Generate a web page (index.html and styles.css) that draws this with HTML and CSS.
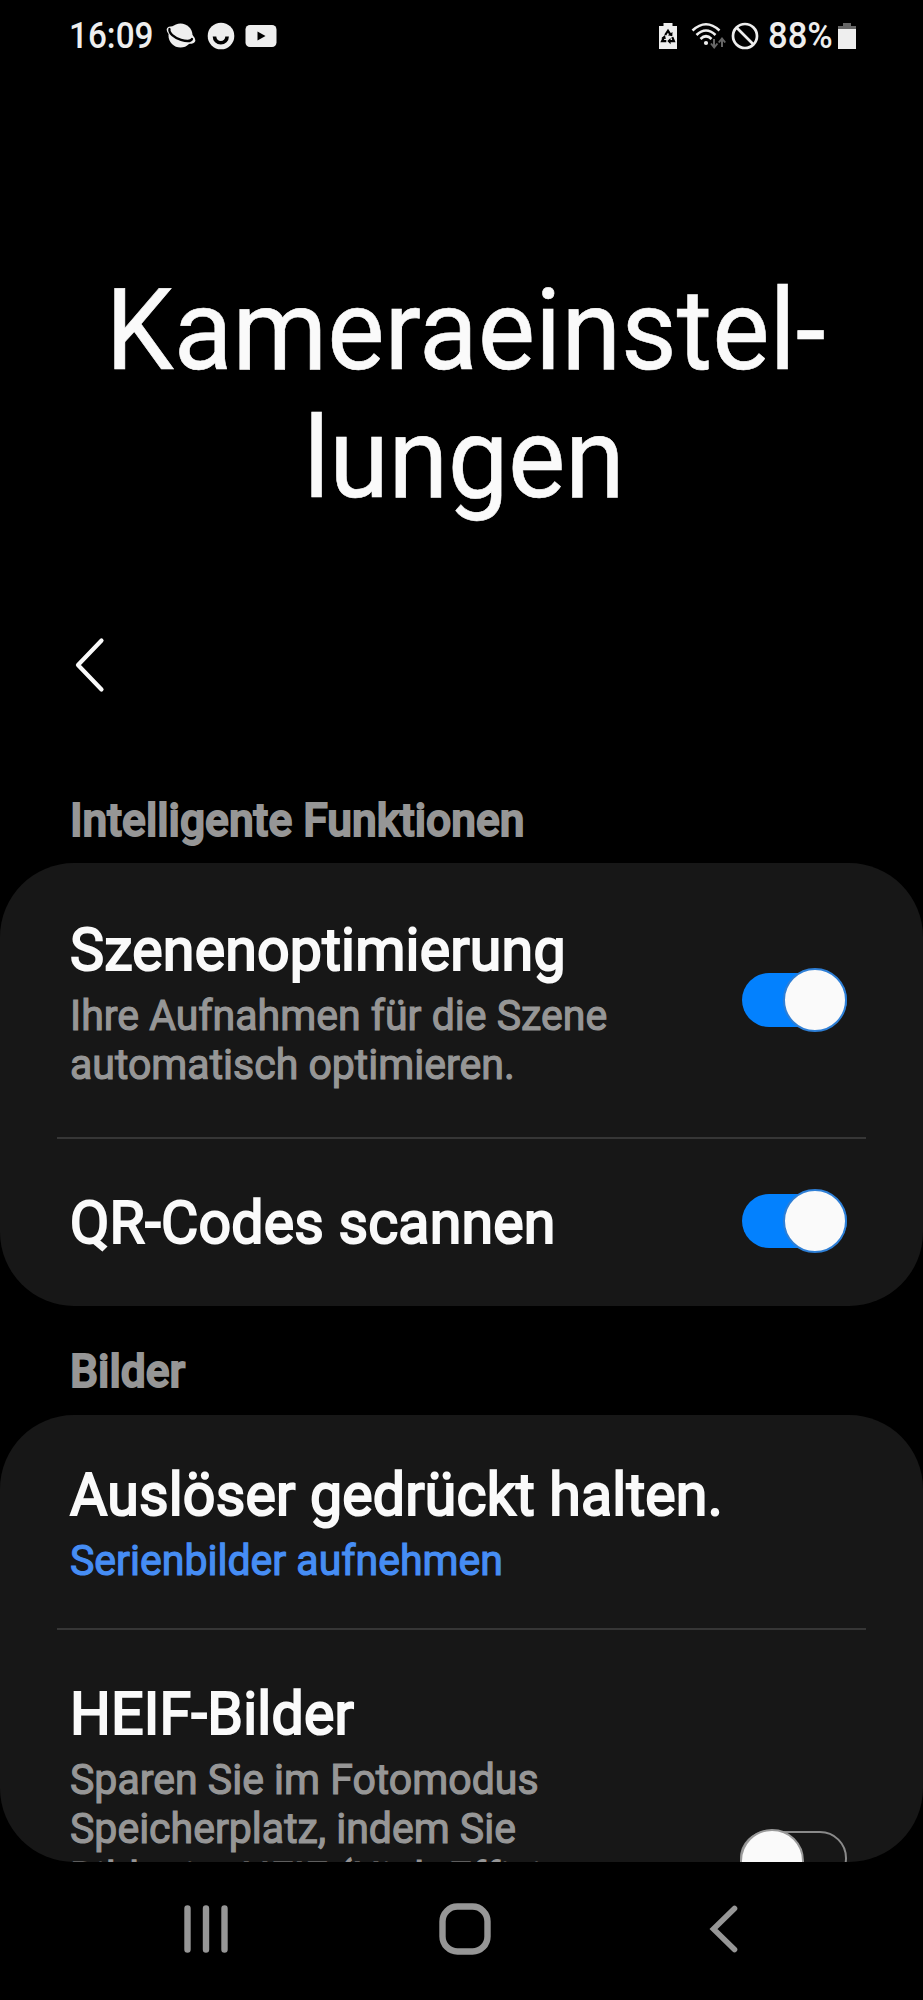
FILE: index.html
```html
<!DOCTYPE html>
<html lang="de">
<head>
<meta charset="utf-8">
<title>Kameraeinstellungen</title>
<link rel="stylesheet" href="styles.css">
</head>
<body>
<div class="screen">
  <header class="status">
    <div class="status-left">
      <span class="clock">16:09</span>
      <svg class="ic-planet" width="32" height="28" viewBox="0 0 32 28"><circle cx="15.5" cy="13.5" r="12" fill="#eee"/><ellipse cx="16" cy="13" rx="15.5" ry="6.6" transform="rotate(25 16 13)" fill="#eee"/><path d="M4.500 7C3.500 11 9 15.500 16 17.800c5 1.600 10 1.600 11-.8" fill="none" stroke="#000" stroke-width="2.300" stroke-linecap="round"/></svg>
      <svg class="ic-smile" width="28" height="28" viewBox="0 0 28 28"><circle cx="14" cy="14" r="13.300" fill="#eee"/><path d="M7.500 14.500a6.300 6.300 0 0 0 12.600 0" fill="none" stroke="#000" stroke-width="3.600"/></svg>
      <svg class="ic-video" width="32" height="24" viewBox="0 0 32 24"><rect x=".5" y="1" width="31" height="22" rx="4.500" fill="#eee"/><path d="M12.500 7.500v9l8-4.500z" fill="#000"/></svg>
    </div>
    <div class="status-right">
      <svg class="ic-saver" width="20" height="28" viewBox="0 0 20 28"><path d="M5.500 1h9v3H19v23H1V4h4.500z" fill="#eee"/><path d="M7.200 13l2.800-4.300 2.300 3.600M14.300 15.200l1.600 3.900h-4.200M8.300 19.100H4.100l1.900-3.900" fill="none" stroke="#000" stroke-width="2.200"/><path d="M9.800 13.200l4.500 1 .2-4.200zM12.600 16v6.200L9.300 19.100zM3.200 16.200l4.600.9-.8-4.200z" fill="#000"/></svg>
      <svg class="ic-wifi" width="36" height="28" viewBox="0 0 36 28"><g fill="none" stroke="#eee" stroke-width="2.600"><path d="M1.500 8.500Q15 -4 28.500 8.500"/><path d="M5.500 13Q15 4 24.500 13"/><path d="M9.500 17Q15 11.500 20.500 17"/></g><circle cx="15" cy="21" r="2.100" fill="#eee"/><g fill="none" stroke="#666" stroke-width="2"><path d="M23 17v8M20 21.500l3.200 4 3.200-4M31 25v-8M27.800 20.500l3.200-4 3.200 4"/></g></svg>
      <svg class="ic-block" width="28" height="28" viewBox="0 0 28 28"><g fill="none" stroke="#eee" stroke-width="2.700"><circle cx="14" cy="14" r="12"/><path d="M5.500 5.500l17 17"/></g></svg>
      <span class="percent">88%</span>
      <svg class="ic-batt" width="20" height="28" viewBox="0 0 20 28"><path d="M6 1h8v3h5v4H1V4h5z" fill="#666"/><path d="M1 7h18v20H1z" fill="#eee"/></svg>
    </div>
  </header>
  <h1 class="title">Kameraeinstel-<br><span class="title-second">lungen</span></h1>
  <div class="toolbar"><svg width="40" height="60" viewBox="0 0 40 60"><path d="M31.500 5.500L8 30 31.500 54.500" fill="none" stroke="#fafafa" stroke-width="4.200" stroke-linecap="round" stroke-linejoin="round"/></svg></div>
  <main class="content">
    <h2 class="section"><span class="section-label">Intelligente Funktionen</span></h2>
    <section class="card card-smart">
      <div class="row row-scene">
        <div class="text"><div class="name">Szenenoptimierung</div><div class="desc">Ihre Aufnahmen für die Szene<br>automatisch optimieren.</div></div>
        <div class="switch on"><i class="knob"></i></div>
      </div>
      <div class="row row-qr">
        <div class="text"><div class="name">QR-Codes scannen</div></div>
        <div class="switch on"><i class="knob"></i></div>
      </div>
    </section>
    <h2 class="section section-pics"><span class="section-label">Bilder</span></h2>
    <section class="card card-pics">
      <div class="row row-shutter">
        <div class="text"><div class="name">Auslöser gedrückt halten.</div><div class="desc link">Serienbilder aufnehmen</div></div>
      </div>
      <div class="row row-heif">
        <div class="text"><div class="name">HEIF-Bilder</div><div class="desc">Sparen Sie im Fotomodus<br>Speicherplatz, indem Sie<br><span class="desc-last">Bilder im HEIF (High-Effici-</span></div></div>
        <div class="switch off"><i class="knob"></i></div>
      </div>
    </section>
  </main>
  <nav class="nav">
    <svg width="52" height="52" viewBox="0 0 52 52"><path d="M7.500 5.500v41M26 5.500v41M44.500 5.500v41" stroke="#969696" stroke-width="6.400" stroke-linecap="round"/></svg>
    <svg class="nav-home" width="52" height="52" viewBox="0 0 52 52"><rect x="3.500" y="3.500" width="45" height="45" rx="15" fill="none" stroke="#969696" stroke-width="6.400"/></svg>
    <svg width="52" height="52" viewBox="0 0 52 52"><path d="M36.500 5.500L15.500 26l21 20.500" fill="none" stroke="#969696" stroke-width="5.600" stroke-linecap="round"/></svg>
  </nav>
</div>
</body>
</html>
```

FILE: styles.css
```css
* { box-sizing: border-box; }
body { margin: 0; background: #000; color: #fafafa; font-family: Roboto, sans-serif; }
.screen { width: 923px; height: 2000px; display: flex; flex-direction: column; overflow: hidden; }
.status { height: 72px; display: flex; justify-content: space-between; padding: 0 66px 0 69px; }
.status-left, .status-right { display: flex; align-items: center; }
.status svg { flex: none; }
.clock, .percent { font-size: 36px; line-height: 74px; color: #eee; font-weight: 500; white-space: nowrap; transform: scaleX(.925); transform-origin: left; }
.clock { width: 84px; }
.ic-planet { margin-left: 12px; }
.ic-smile { margin-left: 10px; }
.ic-video { margin-left: 10px; }
.ic-wifi { margin-left: 13px; }
.ic-block { margin-left: 4px; }
.percent { width: 65px; margin-left: 9px; transform: scaleX(.96); }
.ic-batt { margin-left: 4px; }
.title { height: 526px; margin: 0; padding-top: 194px; font-size: 114px; line-height: 128px; font-weight: 400; -webkit-text-stroke: .6px #fafafa; text-align: center; white-space: nowrap; padding-left: 9px; transform: scaleX(.948); }
.title-second { letter-spacing: -.4px; margin-right: 4px; }
.toolbar { height: 170px; padding: 37px 70px 0; }
.content { height: 1094px; overflow: hidden; }
.section { height: 95px; margin: 0; padding-left: 70px; font-size: 46px; line-height: 56px; font-weight: 500; -webkit-text-stroke: 1.9px #969696; color: #969696; padding-top: 24px; white-space: nowrap; }
.section-label { display: inline-block; transform: scaleX(.966); transform-origin: left; }
.section-pics { height: 109px; padding-top: 37px; }
.card { background: #171717; border-radius: 74px; overflow: hidden; }
.card-smart { height: 443px; }
.card-pics { height: 447px; }
.row { display: flex; justify-content: space-between; padding: 0 76px 0 70px; position: relative; }
.row + .row::before { content: ""; position: absolute; left: 57px; right: 57px; top: 0; height: 2px; background: #363636; }
.row-scene { height: 274px; padding-top: 52px; }
.row-qr { padding-top: 51px; }
.row-shutter { height: 213px; padding-top: 45px; }
.row-heif { padding-top: 51px; }
.text { transform: scaleX(.954); transform-origin: left; }
.name { font-size: 60px; line-height: 70px; font-weight: 400; -webkit-text-stroke: 2.1px #fafafa; letter-spacing: .2px; white-space: nowrap; }
.desc { margin-top: 6px; font-size: 43px; line-height: 49px; color: #969696; -webkit-text-stroke: 1.2px currentColor; white-space: nowrap; }
.desc-last { letter-spacing: .05px; }
.link { color: #468df4; }
.switch { position: relative; flex: none; width: 105px; height: 54px; border-radius: 27px; }
.on { background: #0381fe; margin-top: 58px; }
.row-qr .on { margin-top: 6px; }
.off { width: 107px; border: 2px solid #8a8a8a; margin-top: 152px; }
.knob { position: absolute; width: 64px; height: 64px; border-radius: 50%; background: #fafafa; border: 2px solid #2e7fd6; right: 0; top: -5px; }
.off .knob { left: -2px; top: -4px; border-color: #999; }
.nav { height: 138px; display: flex; align-items: flex-start; justify-content: space-between; padding: 41px 173px 0 180px; }
.nav-home { margin-right: 1px; }
```
